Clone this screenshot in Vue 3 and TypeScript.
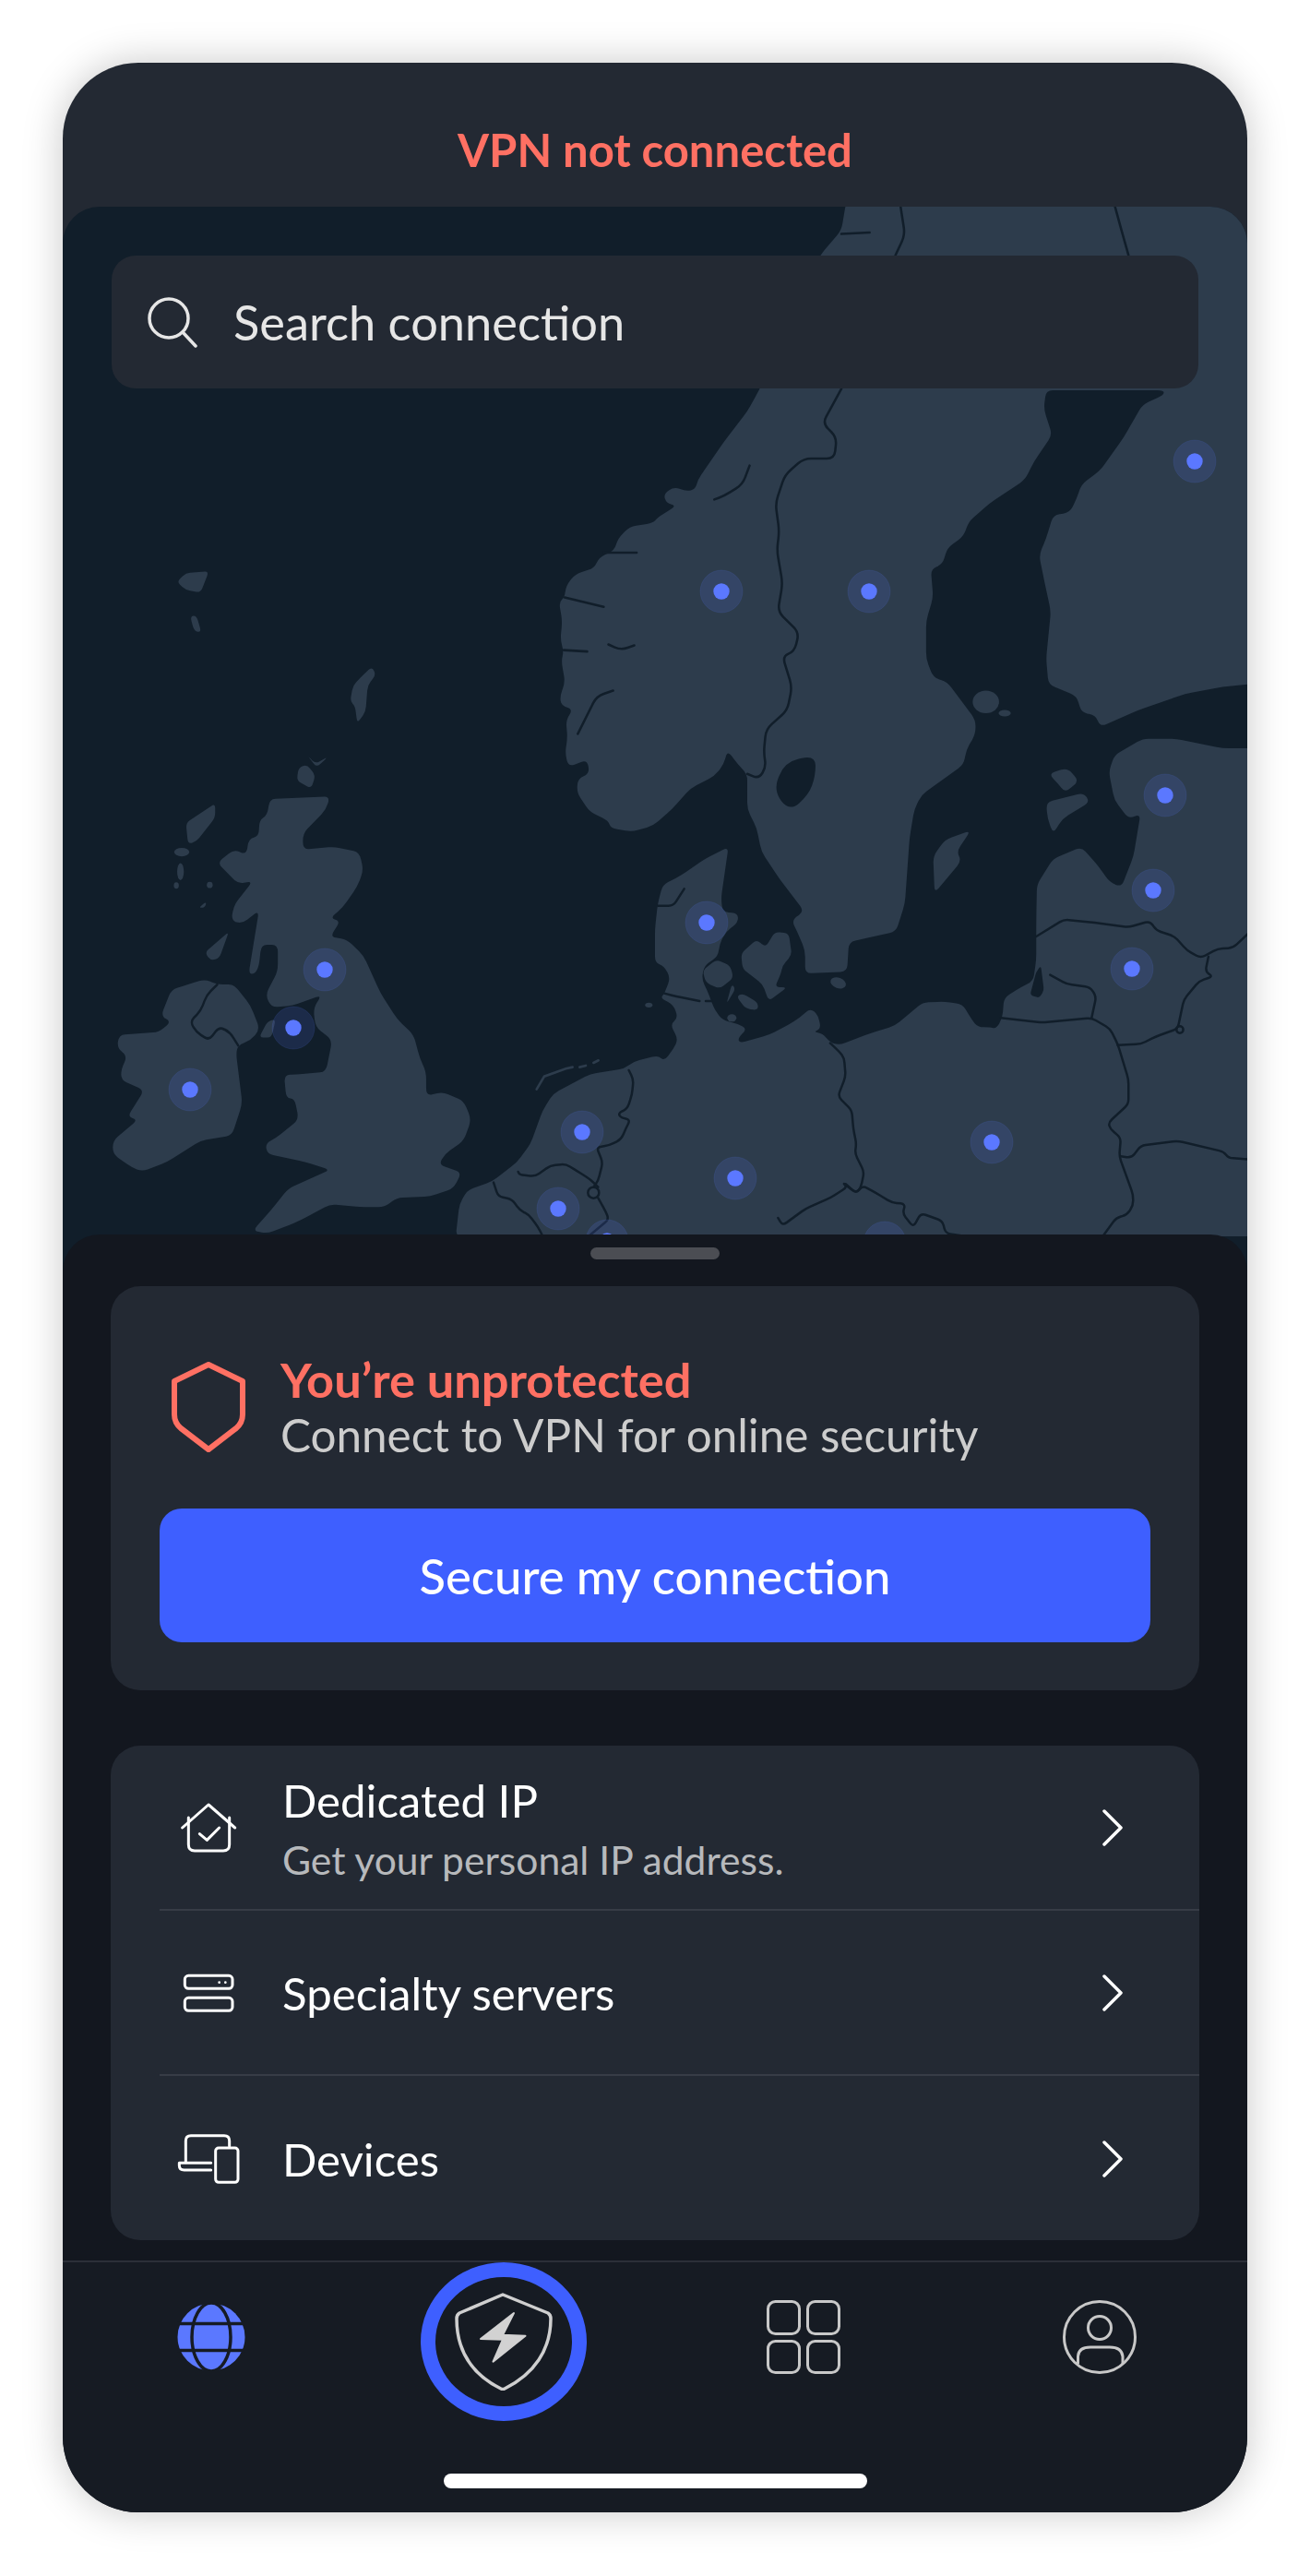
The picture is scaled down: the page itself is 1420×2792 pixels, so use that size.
<script setup lang="ts">
interface Pin {
  x: number
  y: number
}

const pins: Pin[] = [
  { x: 782, y: 641 },
  { x: 942, y: 641 },
  { x: 1295, y: 500 },
  { x: 1263, y: 862 },
  { x: 1250, y: 965 },
  { x: 1227, y: 1050 },
  { x: 766, y: 1000 },
  { x: 631, y: 1227 },
  { x: 797, y: 1277 },
  { x: 605, y: 1310 },
  { x: 658, y: 1345 },
  { x: 959, y: 1347 },
  { x: 1075, y: 1238 },
  { x: 352, y: 1051 },
  { x: 318, y: 1114 },
  { x: 206, y: 1181 },
]

// turns a traced point list into a path whose corners are rounded off
function soft(points: string, radius = 22, closed = true): string {
  const nums = (points.match(/-?\d+(\.\d+)?/g) ?? []).map(Number)
  const pts: [number, number][] = []
  for (let i = 0; i + 1 < nums.length; i += 2) pts.push([nums[i], nums[i + 1]])
  const n = pts.length
  const cut = (a: [number, number], b: [number, number]) => {
    const len = Math.hypot(b[0] - a[0], b[1] - a[1]) || 1
    const t = Math.min(radius, len / 2) / len
    return `${(a[0] + (b[0] - a[0]) * t).toFixed(1)} ${(a[1] + (b[1] - a[1]) * t).toFixed(1)}`
  }
  let d = closed ? `M${cut(pts[0], pts[1])}` : `M${pts[0][0]} ${pts[0][1]}`
  const from = closed ? 1 : 1
  const to = closed ? n + 1 : n - 1
  for (let i = from; i < to; i++) {
    const p = pts[i % n]
    const prev = pts[(i - 1 + n) % n]
    const next = pts[(i + 1) % n]
    d += ` L${cut(p, prev)} Q${p[0]} ${p[1]} ${cut(p, next)}`
  }
  if (closed) return `${d} Z`
  return `${d} L${pts[n - 1][0]} ${pts[n - 1][1]}`
}

const north = soft('700 -10 690 50 645 103 515 390 490 435 440 500 385 580 380 600 360 605 335 595 312 610 318 630 340 635 300 660 290 672 240 680 215 705 208 730 175 745 165 768 125 780 105 805 102 830 90 840 97 880 93 920 100 945 95 965 103 1010 92 1040 95 1060 120 1068 105 1090 108 1130 103 1160 110 1190 150 1175 155 1205 130 1215 128 1245 155 1285 195 1305 200 1320 245 1328 290 1315 330 1280 370 1235 420 1210 440 1185 448 1155 470 1185 490 1205 490 1280 510 1320 520 1370 560 1430 611 1497 584 1516 596 1540 613 1580 613 1629 702 1625 706 1562 806 1540 825 1480 835 1340 845 1280 860 1250 950 1185 955 1155 975 1120 975 1090 915 1010 885 1000 870 960 870 880 885 830 880 770 905 760 915 725 950 700 960 670 1005 630 1080 580 1100 540 1138 485 1120 430 1125 390 1375 390 1375 400 1330 420 1290 490 1240 560 1200 590 1190 620 1175 650 1140 655 1125 705 1110 740 1120 790 1135 860 1125 960 1130 1015 1190 1040 1200 1075 1230 1080 1240 1105 1320 1070 1420 1035 1500 1020 1600 1010 1600 -10', 14)

const northLand = [
  '965 1325 910 1345 885 1380 888 1458 945 1390 935 1370',
  '1130 1205 1170 1192 1195 1220 1165 1245 1150 1225',
  '1125 1265 1205 1245 1218 1265 1160 1300 1140 1332 1128 1300',
].map((p) => soft(p, 14))

const vanern = soft('635 1165 570 1180 545 1240 580 1285 620 1250 635 1210', 30)

const northLines = [
  '690 387 650 460 680 490 675 535 610 535 570 570 550 630 558 690 553 730 565 800 555 860 600 905 590 945 565 955 585 1020 575 1070 530 1110 525 1160 530 1190 515 1215 490 1205',
  '815 -5 825 60 805 103',
  '1270 -5 1285 50 1300 103',
  '690 58 750 55',
  '185 735 255 735',
  '102 830 185 850',
  '195 930 222 942 250 932',
  '100 942 150 945',
  '205 1028 170 1040 130 1120',
  '495 550 480 590 440 615 420 622',
  '1320 1335 1360 1322 1400 1345 1445 1385 1480 1378 1520 1395 1530 1425 1520 1460 1552 1500',
  '1560 1170 1520 1215 1520 1270 1540 1340 1510 1380',
].map((p) => soft(p, 16, false))

const mainland = soft('869 -66 792 -27 716 26 655 57 639 118 630 200 630 310 660 322 680 360 660 412 648 425 690 448 705 490 680 510 705 560 690 590 660 630 640 612 560 632 530 655 420 672 300 735 265 790 225 900 180 960 100 1022 20 1050 -6 1095 -18 1200 2700 1200 2700 -387 2556 -387 2476 -387 2323 -418 2216 -418 2124 -364 2106 -311 2124 -219 2170 -158 2209 -173 2186 -35 2147 64 2109 49 2071 -5 2017 -66 1925 -28 1872 57 1870 180 1870 300 1860 370 1820 390 1765 425 1760 490 1740 525 1720 520 1680 520 1660 495 1630 445 1570 437 1500 440 1410 515 1330 540 1230 578 1200 570 1175 540 1145 535 1170 525 1160 480 1135 458 1100 490 1060 515 1000 545 905 572 900 555 930 525 900 510 850 497 825 465 815 440 800 400 782 365 790 320 835 290 840 250 860 210 900 180 900 150 850 145 845 100', 20)

const danishLand = [
  '785 335 830 300 875 320 885 360 840 395 795 375',
  '910 280 960 235 990 260 1020 210 1065 215 1075 285 1045 320 1040 345 1020 390 1060 390 1000 435 980 380 915 330',
  '895 420 915 410 965 440 965 465 925 460',
  '880 380 862 445 892 395',
].map((p) => soft(p, 16))

const lagoon = soft('1885 320 1895 400 1880 425 1850 415 1870 340', 10)

const southLines = [
  '725 70 690 125 640 125',
  '660 410 700 420 775 435',
  '795 435 815 435',
  '545 660 560 690 555 740 540 785 510 800 520 815 550 820 535 850 520 885 480 905 440 910 460 960 445 1020 430 1040',
  '185 990 190 1000 240 1005 290 970 340 965 380 990 420 1015 445 1040',
  '105 1025 120 1070 165 1080 190 1115 220 1130 250 1170 265 1200',
  '445 1075 470 1120 480 1145 420 1195',
  '1200 572 1230 600 1245 620 1250 680 1225 745 1270 790 1275 850 1285 900 1280 930 1310 990 1300 1040 1285 1060 1250 1030',
  '1030 1140 1045 1165 1120 1110 1200 1075 1255 1040 1240 1025 1285 1060 1305 1035 1350 1060 1400 1090 1445 1095 1435 1125 1470 1170 1495 1125 1565 1150 1575 1190 1640 1200',
  '1755 490 1890 505 2050 490 2110 525 2135 575 2170 690 2170 770 2105 830 2110 850 2145 880 2140 940 2185 1065 2185 1100 2165 1130 2130 1140 2090 1195',
  '1915 350 1970 380 2045 390 2065 420 2050 490',
  '2135 578 2210 575 2260 550 2330 525 2350 430 2400 370 2445 355 2420 340 2430 290',
  '1870 225 1960 170 2060 180 2170 195 2240 175 2260 205 2320 225 2360 270 2405 295 2460 265 2510 262 2560 215',
  '2145 940 2180 945 2210 905 2330 890 2480 925 2495 945 2560 950',
].map((p) => soft(p, 16, false))

const britain = soft('645 725 790 720 780 745 725 790 725 820 800 815 860 825 870 860 855 890 820 930 790 950 815 955 790 985 830 990 870 1020 910 1090 950 1140 990 1170 1005 1215 1020 1240 1020 1285 1060 1278 1110 1295 1128 1330 1110 1370 1065 1395 1050 1415 1105 1430 1085 1460 1030 1475 950 1478 920 1495 860 1495 790 1490 720 1520 690 1530 640 1545 605 1540 650 1500 690 1460 790 1425 730 1410 640 1395 635 1375 660 1365 715 1330 705 1290 685 1290 680 1245 710 1245 780 1240 795 1180 755 1155 750 1120 770 1095 700 1115 650 1118 635 1095 665 1050 665 1000 625 1000 620 1040 610 1055 595 1055 620 935 580 960 553 955 560 925 605 880 570 885 520 845 560 820 590 830 595 800 620 795 620 765 640 755', 14)

const ireland = soft('385 1135 410 1085 450 1075 490 1065 520 1075 560 1075 600 1115 622 1160 600 1180 570 1190 565 1205 580 1300 555 1360 480 1370 400 1410 340 1428 315 1420 270 1395 270 1370 330 1330 305 1325 345 1275 290 1255 290 1235 305 1210 280 1195 285 1170 380 1165 410 1145', 14)

const britishIsles = [
  '620 1175 640 1145 660 1140 650 1175',
  '445 770 515 733 515 760 470 805 450 810',
  '475 930 495 918 490 930',
  '490 1015 548 975 525 1025 505 1030',
  '710 690 715 665 735 660 755 680 745 705',
  '735 642 755 658 785 645 758 665',
  '838 540 845 510 870 490 890 475 900 490 880 510 875 560 855 582 850 550',
  '423 315 445 298 500 295 480 335 445 330',
  '455 380 470 378 482 410 465 408',
].map((p) => soft(p, 10))

const ulsterBorder = soft('520 1075 495 1095 480 1125 455 1145 470 1165 500 1180 525 1155 550 1165 570 1190', 12, false)
</script>

<template>
  <div class="page">
    <div class="phone">
      <header class="status">VPN not connected</header>

      <section class="map">
        <svg class="map-art" viewBox="68 224 1284 1154" width="1284" height="1154">
          <!-- Fennoscandia, traced at 800px crop scale -->
          <g transform="translate(560 224) scale(.5102)">
            <path class="land" :d="north" />
            <ellipse class="land" cx="997" cy="1052" rx="28" ry="24" />
            <ellipse class="land" cx="1037" cy="1076" rx="13" ry="7" />
            <path v-for="d in northLand" :key="d" class="land" :d="d" />
            <path class="sea" :d="vanern" />
            <path v-for="d in northLines" :key="d" class="line" :d="d" />
          </g>

          <!-- Denmark down to Poland and the Baltics, 3x crop scale -->
          <g transform="translate(500 940) scale(.3333)">
            <path class="land" :d="mainland" />
            <path v-for="d in danishLand" :key="d" class="land" :d="d" />
            <ellipse class="land" cx="880" cy="490" rx="15" ry="12" />
            <ellipse class="land" cx="610" cy="448" rx="12" ry="8" />
            <ellipse class="land" cx="1226" cy="376" rx="26" ry="17" transform="rotate(20 1226 376)" />
            <path class="sea" :d="lagoon" />
            <path v-for="d in southLines" :key="d" class="line thick" :d="d" />
            <circle class="line thick" cx="430" cy="1058" r="18" />
            <circle class="line thick" cx="2337" cy="528" r="11" />
            <g class="islet">
              <path d="M245 722 L270 680 L340 655 L362 650" />
              <path d="M385 650 L405 645" />
              <path d="M430 636 L446 628" />
            </g>
          </g>

          <!-- Britain and Ireland, wide crop has a squeezed aspect -->
          <g transform="translate(0 450) scale(.4529 .574)">
            <path class="land" :d="britain" />
            <path class="land" :d="ireland" />
            <path v-for="d in britishIsles" :key="d" class="land" :d="d" />
            <ellipse class="land" cx="435" cy="825" rx="18" ry="8" />
            <ellipse class="land" cx="432" cy="862" rx="8" ry="16" />
            <ellipse class="land" cx="422" cy="888" rx="6" ry="6" />
            <ellipse class="land" cx="502" cy="887" rx="7" ry="6" />
            <path class="line" :d="ulsterBorder" />
          </g>

          <g v-for="pin in pins" :key="`${pin.x}-${pin.y}`">
            <circle class="halo" :cx="pin.x" :cy="pin.y" r="23" />
            <circle class="dot" :cx="pin.x" :cy="pin.y" r="8.7" />
          </g>
        </svg>

        <div class="search">
          <svg class="search-icon" width="56" height="56" viewBox="0 0 56 56">
            <circle cx="25" cy="24" r="21" />
            <path d="M40 39 L54 54" />
          </svg>
          <span>Search connection</span>
        </div>
      </section>

      <section class="sheet">
        <div class="handle"></div>

        <div class="card protect">
          <div class="lead">
            <svg class="lead-icon" width="80" height="98" viewBox="0 0 80 98">
              <path d="M40 3 L77 21 V57 Q77 66 70 72 L40 95 L10 72 Q3 66 3 57 V21 Z" />
            </svg>
            <div>
              <div class="lead-title">You’re unprotected</div>
              <div class="lead-sub">Connect to VPN for online security</div>
            </div>
          </div>
          <button class="cta">Secure my connection</button>
        </div>

        <div class="card menu">
          <div class="row">
            <svg class="row-icon" width="80" height="80" viewBox="197 185 240 240">
              <path d="M232 305 L317 230 L403 305" />
              <path d="M252 272 V360 Q252 380 272 380 H365 Q385 380 385 360 V272" />
              <path d="M288 325 L312 345 L352 305" />
            </svg>
            <div class="row-text">
              <div class="row-title">Dedicated IP</div>
              <div class="row-sub">Get your personal IP address.</div>
            </div>
            <svg class="chevron" width="24" height="40" viewBox="0 0 24 40"><path d="M3 2 L21 20 L3 38" /></svg>
          </div>
          <div class="row">
            <svg class="row-icon" width="80" height="80" viewBox="197 722 240 240">
              <rect x="240" y="786" width="155" height="42" rx="12" />
              <rect x="240" y="858" width="155" height="42" rx="12" />
              <circle class="fill" cx="352" cy="808" r="4" />
              <circle class="fill" cx="372" cy="808" r="4" />
            </svg>
            <div class="row-text">
              <div class="row-title">Specialty servers</div>
            </div>
            <svg class="chevron" width="24" height="40" viewBox="0 0 24 40"><path d="M3 2 L21 20 L3 38" /></svg>
          </div>
          <div class="row">
            <svg class="row-icon" width="80" height="80" viewBox="197 1259 240 240">
              <path d="M243 1390 V1320 Q243 1303 260 1303 H368 Q385 1303 385 1320 V1338" />
              <path d="M325 1392 H222 V1400 Q222 1415 238 1415 H325" />
              <rect x="340" y="1343" width="73" height="112" rx="10" />
            </svg>
            <div class="row-text">
              <div class="row-title">Devices</div>
            </div>
            <svg class="chevron" width="24" height="40" viewBox="0 0 24 40"><path d="M3 2 L21 20 L3 38" /></svg>
          </div>
        </div>
      </section>

      <nav class="tabs">
        <div class="tab-row">
          <div class="tab">
            <svg width="74" height="74" viewBox="0 0 74 74">
              <circle class="globe-fill" cx="37" cy="37" r="36.5" />
              <ellipse class="globe-line" cx="37" cy="37" rx="21" ry="37" />
              <path class="globe-line" d="M0 22.5 H74 M0 51.5 H74" />
            </svg>
          </div>
          <div class="tab">
            <div class="ring">
              <svg width="106" height="106" viewBox="0 0 106 106">
                <path class="ring-shield" d="M52 2 L101 22 Q104 24 104 28 C104 62 86 88 54 104 Q52 105 50 104 C18 88 2 62 2 28 Q2 24 5 22 Z" />
                <path class="ring-bolt" d="M64 22 L52 45.7 L76.5 46.7 L41.5 74.7 L52 50.7 L28 50 Z" />
              </svg>
            </div>
          </div>
          <div class="tab">
            <svg class="tab-outline" width="80" height="80" viewBox="0 0 80 80">
              <rect x="1.5" y="1.5" width="34" height="35" rx="8" />
              <rect x="44.5" y="1.5" width="34" height="35" rx="8" />
              <rect x="1.5" y="44.5" width="34" height="34" rx="8" />
              <rect x="44.5" y="44.5" width="34" height="34" rx="8" />
            </svg>
          </div>
          <div class="tab">
            <svg class="tab-outline" width="80" height="80" viewBox="0 0 80 80">
              <circle cx="40" cy="40" r="38.5" />
              <ellipse cx="40" cy="30" rx="12.5" ry="12.5" />
              <path d="M16.5 69 V61 Q17 51 30 51 H51 Q64 51 65 61 V69" />
            </svg>
          </div>
        </div>
        <div class="home-bar"></div>
      </nav>
    </div>
  </div>
</template>

<style>
body {
  background: #fff;
}
</style>

<style scoped>
.page {
  box-sizing: border-box;
  width: 1420px;
  height: 2792px;
  padding: 68px;
  font-family: Lato, "Liberation Sans", sans-serif;
  font-feature-settings: "liga" 1;
}

.phone {
  width: 1284px;
  height: 2655px;
  border-radius: 82px;
  overflow: hidden;
  background: #232933;
  display: flex;
  flex-direction: column;
  box-shadow: 0 0 44px rgba(0, 0, 0, 0.22);
}

.status {
  height: 156px;
  flex: none;
  color: #ff7063;
  font-size: 49px;
  font-weight: 700;
  line-height: 60px;
  padding-top: 64px;
  box-sizing: border-box;
  text-align: center;
}

.map {
  position: relative;
  height: 1154px;
  flex: none;
  border-radius: 40px 40px 0 0;
  overflow: hidden;
  background: #111e2a;
  padding: 53px 53px 0;
  box-sizing: border-box;
}

.map-art {
  position: absolute;
  left: 0;
  top: 0;
}

.land {
  fill: #2d3c4c;
}

.sea {
  fill: #111e2a;
}

.line {
  fill: none;
  stroke: #111e2a;
  stroke-width: 5;
  stroke-linejoin: round;
  stroke-linecap: round;
}

.line.thick {
  stroke-width: 7.5;
}

.islet {
  fill: none;
  stroke: #2d3c4c;
  stroke-width: 8;
  stroke-linecap: round;
}

.halo {
  fill: rgba(91, 120, 255, 0.15);
  stroke: rgba(91, 120, 255, 0.12);
  stroke-width: 1;
}

.dot {
  fill: #5b78ff;
}

.search {
  position: relative;
  height: 144px;
  border-radius: 26px;
  background: #232933;
  display: flex;
  align-items: center;
  padding-left: 37px;
  gap: 39px;
  color: #e6e6e6;
  font-size: 52.4px;
  line-height: 60px;
}

.search-icon {
  flex: none;
  fill: none;
  stroke: #e6e6e6;
  stroke-width: 3.5;
  stroke-linecap: round;
}

.sheet {
  position: relative;
  margin-top: -40px;
  height: 1112px;
  flex: none;
  box-sizing: border-box;
  padding: 14px 52px 0;
  border-radius: 40px 40px 0 0;
  background: #13171f;
}

.handle {
  width: 140px;
  height: 13px;
  border-radius: 7px;
  background: #4b4d53;
  margin: 0 auto 29px;
}

.card {
  background: #232933;
  border-radius: 32px;
}

.protect {
  height: 438px;
  box-sizing: border-box;
  padding: 70px 53px 0;
}

.lead {
  display: flex;
  align-items: center;
  gap: 38px;
  padding-left: 13px;
}

.lead-icon {
  flex: none;
  fill: none;
  stroke: #ff7063;
  stroke-width: 6;
  stroke-linejoin: round;
}

.lead-title {
  color: #ff7063;
  font-size: 52.4px;
  font-weight: 700;
  line-height: 61px;
}

.lead-sub {
  color: #cdcdcd;
  font-size: 49.4px;
  line-height: 61px;
}

.cta {
  display: block;
  width: 100%;
  height: 145px;
  margin-top: 49px;
  border: 0;
  border-radius: 24px;
  background: #3e5fff;
  color: #fff;
  font-family: inherit;
  font-size: 52.6px;
  font-weight: 500;
}

.menu {
  margin-top: 60px;
  height: 536px;
  padding-left: 53px;
}

.row {
  height: 179px;
  box-sizing: border-box;
  display: flex;
  align-items: center;
  padding: 0 82px 0 13px;
  border-bottom: 2px solid #373c46;
}

.row:last-child {
  border-bottom: 0;
}

.row-icon {
  flex: none;
  fill: none;
  stroke: #fff;
  stroke-width: 9;
  stroke-linejoin: round;
  stroke-linecap: round;
}

.row-icon .fill {
  fill: #fff;
  stroke: none;
}

.row-text {
  flex: 1;
  margin-left: 40px;
}

.row-title {
  color: #fff;
  font-size: 49.2px;
  line-height: 58px;
}

.row-sub {
  color: #b7b9bc;
  font-size: 42.6px;
  line-height: 46px;
  margin-top: 13px;
}

.chevron {
  flex: none;
  fill: none;
  stroke: #fff;
  stroke-width: 3.5;
  stroke-linecap: round;
  stroke-linejoin: round;
}

.tabs {
  position: relative;
  flex: 1;
  border-top: 2px solid #2b2f38;
  background: #161b23;
  display: flex;
  flex-direction: column;
  padding-top: 41px;
}

.tab-row {
  display: grid;
  grid-template-columns: repeat(4, 321px);
}

.tab {
  height: 80px;
  display: flex;
  align-items: center;
  justify-content: center;
}

.ring {
  flex: none;
  box-sizing: border-box;
  width: 180px;
  height: 172px;
  margin: 10px 7px 0 0;
  border: 16px solid #3e5fff;
  border-radius: 50%;
  background: #161b23;
  display: flex;
  align-items: center;
  justify-content: center;
}

.ring-shield {
  fill: none;
  stroke: #cfcfcf;
  stroke-width: 3.5;
  stroke-linejoin: round;
}

.ring-bolt {
  fill: #d2d2d2;
  stroke: #d2d2d2;
  stroke-width: 2;
  stroke-linejoin: round;
}

.globe-fill {
  fill: #5b78ff;
}

.globe-line {
  fill: none;
  stroke: #161b23;
  stroke-width: 3.5;
}

.tab-outline {
  fill: none;
  stroke: #c8c8c8;
  stroke-width: 3;
  stroke-linejoin: round;
}

.home-bar {
  width: 459px;
  height: 16px;
  border-radius: 8px;
  background: #fff;
  margin: auto auto 26px;
}
</style>
